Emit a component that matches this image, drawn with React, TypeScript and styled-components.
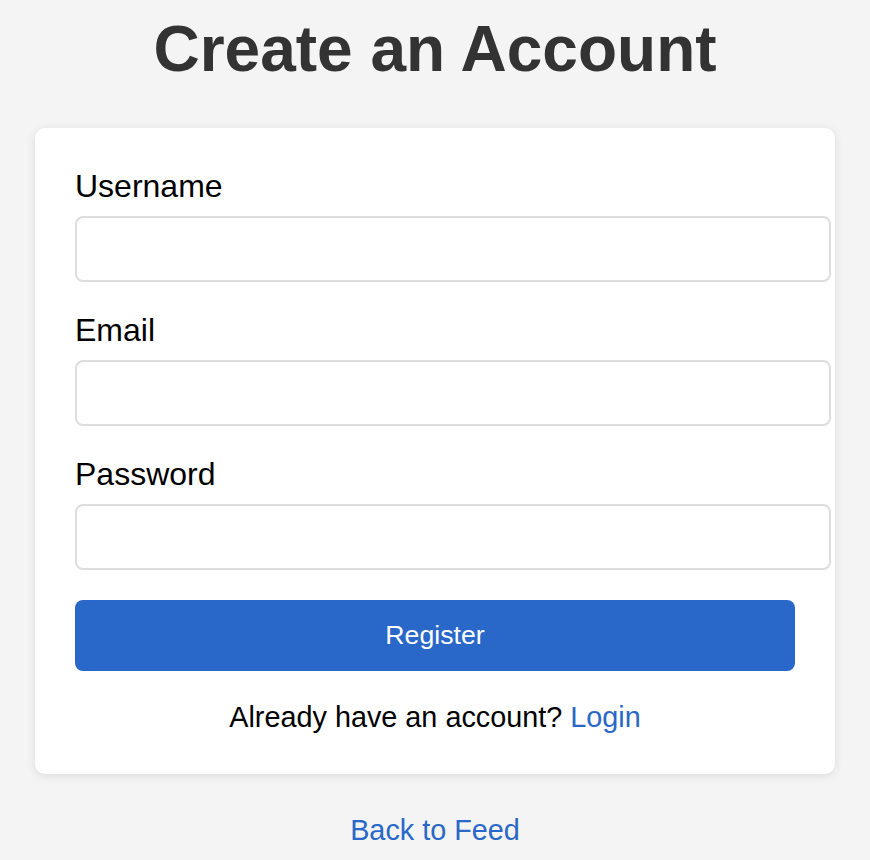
import React from 'react';
import styled, { createGlobalStyle } from 'styled-components';

const GlobalStyle = createGlobalStyle`
  html, body {
    margin: 0;
    padding: 0;
    background: #f4f4f4;
    font-family: "Liberation Sans", Arial, Helvetica, sans-serif;
  }
`;

export default function App() {
  return (
    <>
      <GlobalStyle />
      <Page>
        <Title>Create an Account</Title>
        <Card>
          <Field>
            <Label htmlFor="username">Username</Label>
            <Input id="username" type="text" />
          </Field>
          <Field>
            <Label htmlFor="email">Email</Label>
            <Input id="email" type="email" />
          </Field>
          <Field>
            <Label htmlFor="password">Password</Label>
            <Input id="password" type="password" />
          </Field>
          <SubmitButton type="button">Register</SubmitButton>
          <Footnote>
            Already have an account? <TextLink href="#">Login</TextLink>
          </Footnote>
        </Card>
        <BackLink href="#">Back to Feed</BackLink>
      </Page>
    </>
  );
}

// Styled Components
const Page = styled.div`
  display: flex;
  flex-direction: column;
  align-items: center;
  padding-top: 12px;
  padding-bottom: 20px;
`;

const Title = styled.h1`
  font-size: 64px;
  font-weight: 700;
  line-height: normal;
  color: #333;
  margin: 0 0 42px;
`;

const Card = styled.div`
  width: 800px;
  box-sizing: border-box;
  background: #fff;
  border-radius: 10px;
  padding: 40px;
  box-shadow: 0 2px 10px rgba(0, 0, 0, 0.1);
`;

const Field = styled.div`
  margin-bottom: 30px;
`;

const Label = styled.label`
  display: block;
  font-size: 32px;
  line-height: normal;
  color: #000;
  margin-bottom: 11px;
`;

const Input = styled.input`
  display: block;
  width: 100%;
  height: 30px;
  box-sizing: content-box;
  padding: 16px;
  border: 2px solid #ddd;
  border-radius: 8px;
  font-family: inherit;
  font-size: 26px;
  background: #fff;
  outline: none;
`;

const SubmitButton = styled.button`
  display: block;
  width: 100%;
  padding: 20px;
  border: none;
  border-radius: 8px;
  background: #2968c8;
  color: #fff;
  font-family: inherit;
  font-size: 26.67px;
  line-height: normal;
  cursor: pointer;
`;

const Footnote = styled.p`
  margin: 30px 0 0;
  text-align: center;
  font-size: 28.8px;
  line-height: normal;
  color: #000;
`;

const TextLink = styled.a`
  color: #2968c8;
  text-decoration: none;
`;

const BackLink = styled.a`
  margin-top: 40px;
  font-size: 28.8px;
  line-height: normal;
  color: #2968c8;
  text-decoration: none;
`;
